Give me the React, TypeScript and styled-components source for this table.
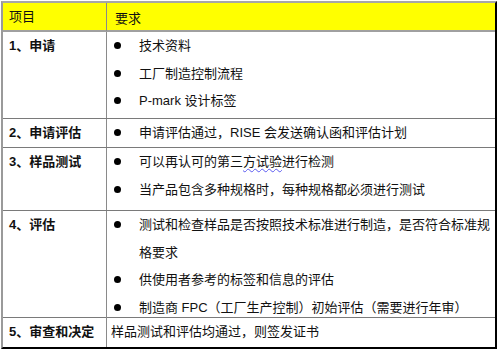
import React from 'react';
import styled, { createGlobalStyle } from 'styled-components';

const GlobalStyle = createGlobalStyle`
  html, body {
    margin: 0;
    padding: 0;
    background: #ffffff;
  }
  body {
    font-family: "Liberation Sans", "Noto Sans CJK SC", sans-serif;
    font-size: 13px;
    color: #111;
  }
`;

const Page = styled.div`
  padding: 1px 0 0 1px;
`;

const Table = styled.div`
  width: 496px;
  box-sizing: border-box;
  border-top: 2px solid #a6a6a6;
  border-left: 2px solid #9a9a9a;
  border-right: 2px solid #000;
  border-bottom: 2px solid #000;
  display: flex;
  flex-direction: column;
`;

const HeaderRow = styled.div`
  display: grid;
  grid-template-columns: 104px 1fr;
  height: 29px;
  box-sizing: border-box;
  background: #ffff00;
  border-bottom: 2px solid #a0a0a0;
  align-items: center;
`;

const BodyRow = styled.div<{ $h: number; $last?: boolean }>`
  display: grid;
  grid-template-columns: 104px 1fr;
  height: ${p => p.$h}px;
  box-sizing: border-box;
  border-bottom: ${p => (p.$last ? 'none' : '1px solid #7a7a7a')};
`;

const StepCell = styled.div<{ $bold?: boolean }>`
  height: 100%;
  box-sizing: border-box;
  border-right: 1px solid #8a8a8a;
  padding-left: 6px;
  line-height: 28px;
  font-weight: ${p => (p.$bold ? 700 : 400)};
  display: flex;
  align-items: ${p => (p.$bold ? 'flex-start' : 'center')};
`;

const HeadCell = styled.div`
  padding-left: 8px;
`;

const ReqCell = styled.div`
  height: 100%;
`;

const BulletList = styled.ul`
  list-style: none;
  margin: 0;
  padding: 0 0 0 32px;
`;

const BulletItem = styled.li`
  position: relative;
  line-height: 27.5px;
  &::before {
    content: '';
    position: absolute;
    left: -25px;
    top: 10px;
    width: 7px;
    height: 7px;
    border-radius: 50%;
    background: #000;
  }
`;

const PlainText = styled.div`
  padding-left: 4px;
  line-height: 28px;
`;

const Squiggle = styled.span`
  text-decoration: underline wavy #5a5af0;
  text-decoration-thickness: 1px;
  text-underline-offset: 2px;
`;

type Row = { step: string; height: number; items?: React.ReactNode[]; plain?: string };

const rows: Row[] = [
  {
    step: '1、申请',
    height: 87,
    items: ['技术资料', '工厂制造控制流程', 'P-mark 设计标签'],
  },
  {
    step: '2、申请评估',
    height: 29,
    items: ['申请评估通过，RISE 会发送确认函和评估计划'],
  },
  {
    step: '3、样品测试',
    height: 63,
    items: [
      <>
        可以再认可的第三<Squiggle>方试验</Squiggle>进行检测
      </>,
      '当产品包含多种规格时，每种规格都必须进行测试',
    ],
  },
  {
    step: '4、评估',
    height: 107,
    items: [
      '测试和检查样品是否按照技术标准进行制造，是否符合标准规格要求',
      '供使用者参考的标签和信息的评估',
      '制造商 FPC（工厂生产控制）初始评估（需要进行年审）',
    ],
  },
  {
    step: '5、审查和决定',
    height: 29,
    plain: '样品测试和评估均通过，则签发证书',
  },
];

export default function App() {
  return (
    <>
      <GlobalStyle />
      <Page>
        <Table>
          <HeaderRow>
            <StepCell>项目</StepCell>
            <HeadCell>要求</HeadCell>
          </HeaderRow>
          {rows.map((row, i) => (
            <BodyRow key={row.step} $h={row.height} $last={i === rows.length - 1}>
              <StepCell $bold>{row.step}</StepCell>
              <ReqCell>
                {row.items ? (
                  <BulletList>
                    {row.items.map((item, j) => (
                      <BulletItem key={j}>{item}</BulletItem>
                    ))}
                  </BulletList>
                ) : (
                  <PlainText>{row.plain}</PlainText>
                )}
              </ReqCell>
            </BodyRow>
          ))}
        </Table>
      </Page>
    </>
  );
}
